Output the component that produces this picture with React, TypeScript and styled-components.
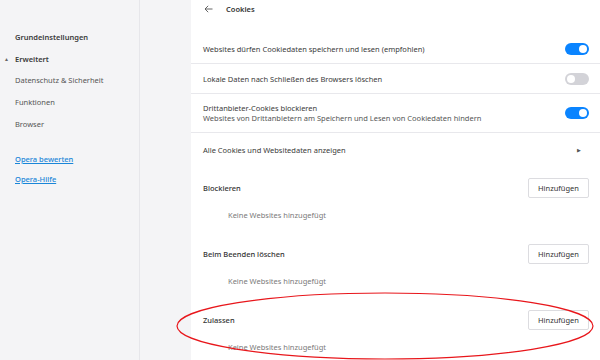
import React from "react";
import styled, { createGlobalStyle } from "styled-components";

const Global = createGlobalStyle`
  html, body { margin: 0; padding: 0; overflow: hidden; }
  body { font-family: "Noto Sans", "Open Sans", sans-serif; font-size: 7.5px; color: #333; background: #fff; }
  * { box-sizing: border-box; }
`;

const Page = styled.div`
  position: relative;
  display: flex;
  width: 600px;
  height: 360px;
  overflow: hidden;
`;

const Sidebar = styled.nav`
  width: 140px;
  flex-shrink: 0;
  background: #f4f4f6;
  border-right: 1px solid #e6e6ea;
  padding-top: 26px;
  display: flex;
  flex-direction: column;
`;

const Gutter = styled.div`
  width: 51px;
  flex-shrink: 0;
  background: #f4f4f6;
`;

const NavItem = styled.div<{ $bold?: boolean }>`
  height: 21.75px;
  flex-shrink: 0;
  display: flex;
  align-items: center;
  padding-left: 15px;
  font-weight: ${(p) => (p.$bold ? 600 : 400)};
  color: ${(p) => (p.$bold ? "#3a3a3a" : "#555")};
  position: relative;
`;

const Caret = styled.span`
  position: absolute;
  left: 4px;
  font-size: 5px;
  color: #666;
`;

const NavLink = styled.a<{ $first?: boolean }>`
  height: 20px;
  flex-shrink: 0;
  display: flex;
  align-items: center;
  padding-left: 15px;
  margin-top: ${(p) => (p.$first ? "14.25px" : "0")};
  color: #1a86d8;
  text-decoration: underline;
  font-weight: 500;
`;

const Main = styled.main`
  flex: 1;
  background: #fff;
  display: flex;
  flex-direction: column;
  & > * { flex-shrink: 0; }
`;

const Header = styled.div`
  height: 18px;
  display: flex;
  align-items: center;
  padding-left: 13px;
  gap: 13px;
  font-weight: 600;
  color: #333;
`;

const BackIcon = styled.svg`
  display: block;
`;

const Rows = styled.div`
  margin-top: 16px;
  display: flex;
  flex-direction: column;
  & > * { flex-shrink: 0; }
`;

const Row = styled.div<{ $h: number; $line?: boolean }>`
  height: ${(p) => p.$h}px;
  display: flex;
  align-items: center;
  justify-content: space-between;
  padding: 0 11px 0 12px;
  border-bottom: ${(p) => (p.$line ? "1px solid #e8e8ec" : "none")};
`;

const RowText = styled.div`
  display: flex;
  flex-direction: column;
  line-height: 10px;
  color: #3a3a3a;
`;

const Sub = styled.span`
  color: #555;
`;

const Toggle = styled.div<{ $on: boolean }>`
  width: 24px;
  height: 12px;
  border-radius: 6px;
  background: ${(p) => (p.$on ? "#0a84ff" : "#d3d3d8")};
  position: relative;
  &::after {
    content: "";
    position: absolute;
    top: 2px;
    left: ${(p) => (p.$on ? "14px" : "2px")};
    width: 8px;
    height: 8px;
    border-radius: 50%;
    background: #fff;
  }
`;

const Arrow = styled.span`
  font-size: 5px;
  color: #555;
  margin-right: 8px;
`;

const Sections = styled.div`
  margin-top: 10px;
  display: flex;
  flex-direction: column;
  & > * { flex-shrink: 0; }
`;

const Section = styled.div`
  display: flex;
  flex-direction: column;
  height: 66px;
`;

const SectionHead = styled.div`
  height: 24px;
  display: flex;
  align-items: center;
  justify-content: space-between;
  padding: 0 11px 0 12px;
  font-weight: 500;
  color: #333;
`;

const Button = styled.button`
  width: 61px;
  height: 20px;
  border: 1px solid #dcdce0;
  border-radius: 2px;
  background: #fff;
  font-family: inherit;
  font-size: 7.5px;
  color: #333;
  padding: 0;
`;

const Empty = styled.div`
  height: 30px;
  padding-left: 37px;
  display: flex;
  align-items: center;
  color: #7a7a7a;
`;

const Annotation = styled.svg`
  position: absolute;
  left: 0;
  top: 0;
  pointer-events: none;
`;

const sections = ["Blockieren", "Beim Beenden löschen", "Zulassen"];

export default function App() {
  return (
    <>
      <Global />
      <Page>
        <Sidebar>
          <NavItem $bold>Grundeinstellungen</NavItem>
          <NavItem $bold>
            <Caret>▲</Caret>Erweitert
          </NavItem>
          <NavItem>Datenschutz &amp; Sicherheit</NavItem>
          <NavItem>Funktionen</NavItem>
          <NavItem>Browser</NavItem>
          <NavLink $first>Opera bewerten</NavLink>
          <NavLink>Opera-Hilfe</NavLink>
        </Sidebar>
        <Gutter />
        <Main>
          <Header>
            <BackIcon width="9" height="8" viewBox="0 0 9 8">
              <path d="M8.5 4H1M4.2 0.8L1 4l3.2 3.2" fill="none" stroke="#555" strokeWidth="0.9" />
            </BackIcon>
            <span>Cookies</span>
          </Header>
          <Rows>
            <Row $h={30} $line>
              <RowText>Websites dürfen Cookiedaten speichern und lesen (empfohlen)</RowText>
              <Toggle $on />
            </Row>
            <Row $h={30} $line>
              <RowText>Lokale Daten nach Schließen des Browsers löschen</RowText>
              <Toggle $on={false} />
            </Row>
            <Row $h={39} $line>
              <RowText>
                <span>Drittanbieter-Cookies blockieren</span>
                <Sub>Websites von Drittanbietern am Speichern und Lesen von Cookiedaten hindern</Sub>
              </RowText>
              <Toggle $on />
            </Row>
            <Row $h={33}>
              <RowText>Alle Cookies und Websitedaten anzeigen</RowText>
              <Arrow>▶</Arrow>
            </Row>
          </Rows>
          <Sections>
            {sections.map((s) => (
              <Section key={s}>
                <SectionHead>
                  <span>{s}</span>
                  <Button>Hinzufügen</Button>
                </SectionHead>
                <Empty>Keine Websites hinzugefügt</Empty>
              </Section>
            ))}
          </Sections>
        </Main>
        <Annotation width="600" height="360" viewBox="0 0 600 360">
          <ellipse cx="385" cy="326" rx="208" ry="33" fill="none" stroke="#e8161b" strokeWidth="1.2" />
        </Annotation>
      </Page>
    </>
  );
}
